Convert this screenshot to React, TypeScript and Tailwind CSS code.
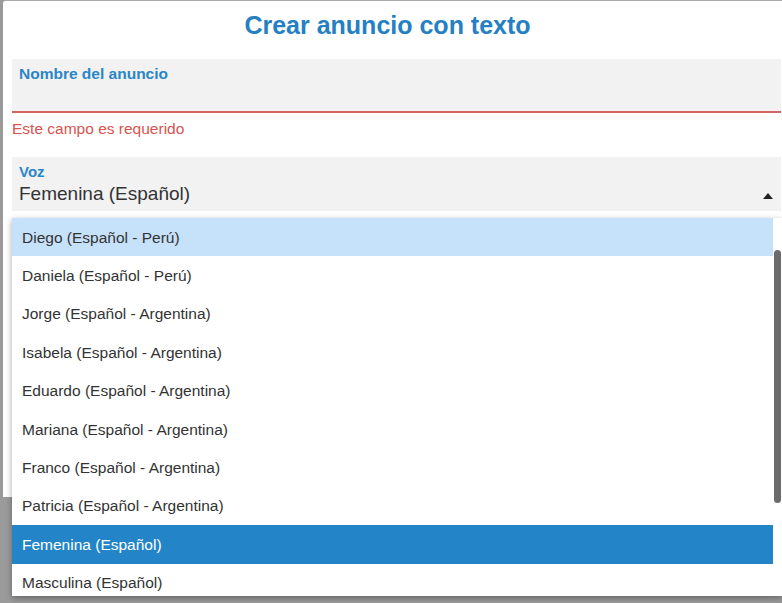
import { useState } from 'react'

const voices = [
  'Diego (Español - Perú)',
  'Daniela (Español - Perú)',
  'Jorge (Español - Argentina)',
  'Isabela (Español - Argentina)',
  'Eduardo (Español - Argentina)',
  'Mariana (Español - Argentina)',
  'Franco (Español - Argentina)',
  'Patricia (Español - Argentina)',
  'Femenina (Español)',
  'Masculina (Español)',
  'Pedro (Español - México)',
  'Lucía (Español - México)',
]

function VoiceMenu({ selected, hovered }: { selected: string, hovered: string }) {
  return (
    <div className="absolute left-[12px] top-[218px] w-[770px] h-[378px] bg-white shadow-[0_2px_6px_rgba(0,0,0,0.35)] flex">
      <ul className="flex-1 overflow-hidden">
        {voices.map(v => (
          <li
            key={v}
            className={
              'h-[38.4px] flex items-center pl-[10px] text-[15.5px] ' +
              (v === selected ? 'bg-[#2385c7] text-white' : v === hovered ? 'bg-[#c6e1fa] text-[#333]' : 'text-[#333]')
            }
          >
            {v}
          </li>
        ))}
      </ul>
      <div className="w-[9px] pt-[32px] pb-[93px] pl-[1px]">
        <div className="w-[7px] h-full rounded-full bg-[#6b6b6b]" />
      </div>
    </div>
  )
}

export default function App() {
  const [voice] = useState('Femenina (Español)')

  return (
    <div className="relative w-[782px] h-[603px] overflow-hidden bg-[#9a9a9a] font-['Liberation_Sans',Arial,sans-serif]">
      <div className="flex pl-[3px]">
        <div className="w-[790px] h-[497px] bg-white border-t border-[#a8a8a8] rounded-tl-[3px] px-[9px]">
          <div className="w-[769px]">
            <h2 className="h-[58px] flex items-center justify-center pr-[18px] pb-[8px] text-[25px] font-bold text-[#2580c3]">
              Crear anuncio con texto
            </h2>
            <div className="h-[54px] bg-[#f2f2f2] border-b-2 border-[#d26464] px-[7px] pt-[3px]">
              <label className="block text-[15.5px] font-bold text-[#2a86c6]">Nombre del anuncio</label>
            </div>
            <p className="h-[34px] pt-[4px] text-[15.5px] text-[#d9534f]">Este campo es requerido</p>
            <div className="mt-[10px] h-[54px] bg-[#f2f2f2] px-[7px] pt-[5px] flex items-end justify-between pb-[6px]">
              <div className="flex flex-col">
                <span className="text-[15px] font-bold leading-[17px] text-[#2a86c6] mb-[3px]">Voz</span>
                <span className="text-[19px] leading-[22px] text-[#333]">{voice}</span>
              </div>
              <svg width="10" height="6" viewBox="0 0 10 6" className="mb-[6px] mr-[1px]">
                <path d="M0 6 L5 0 L10 6 Z" fill="#222" />
              </svg>
            </div>
          </div>
        </div>
      </div>
      <VoiceMenu selected={voice} hovered="Diego (Español - Perú)" />
    </div>
  )
}
